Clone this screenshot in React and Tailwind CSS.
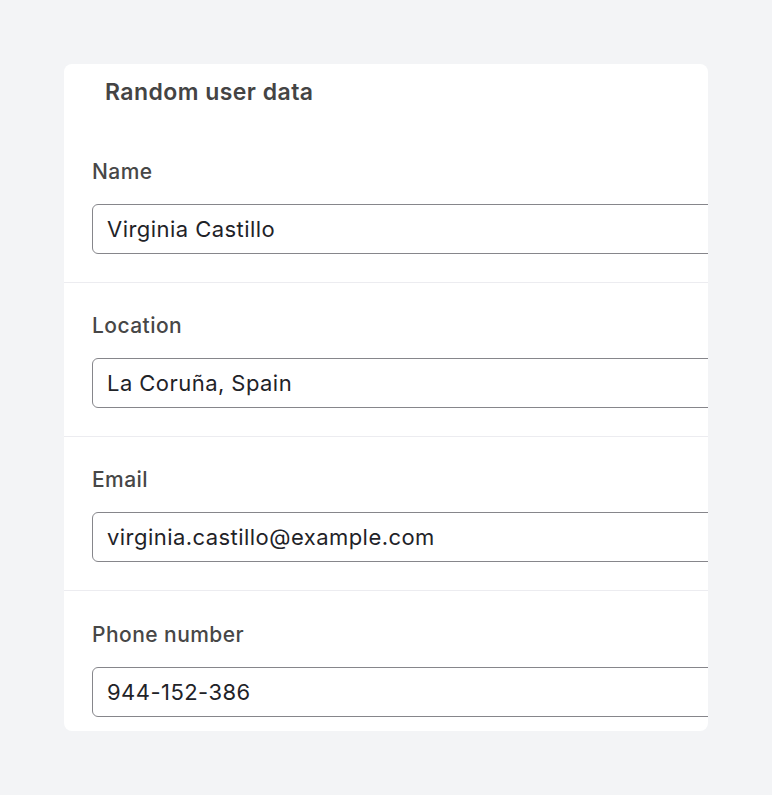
import React from "react";

const fields = [
  { label: "Name", value: "Virginia Castillo" },
  { label: "Location", value: "La Coruña, Spain" },
  { label: "Email", value: "virginia.castillo@example.com" },
  { label: "Phone number", value: "944-152-386" },
];

export default function App() {
  return (
    <div
      className="min-h-[795px] w-full bg-[#f3f4f6] pt-[64px] pl-[64px]"
      style={{ fontFamily: "Inter, 'Noto Sans', sans-serif" }}
    >
      <div className="w-[644px] overflow-hidden rounded-lg bg-white">
        <div className="pl-[41px] pt-[14px] pb-[23px]">
          <h1 className="text-[23px] leading-[28px] font-semibold tracking-[0.45px] text-[#444444]">
            Random user data
          </h1>
        </div>
        {fields.map((f, i) => (
          <div
            key={f.label}
            className={
              i === 0
                ? "px-[28px] pt-[31px] pb-[28px]"
                : i === fields.length - 1
                ? "border-t border-[#ececf0] px-[28px] pt-[32px] pb-[14px]"
                : "border-t border-[#ececf0] px-[28px] pt-[31px] pb-[28px]"
            }
          >
            <div className="text-[21px] leading-6 font-medium tracking-[0.45px] text-[#474747]">
              {f.label}
            </div>
            <div className="mt-[20px] flex h-[50px] w-[700px] items-center rounded-md border border-[#86868b] pl-[14px] pt-[1px] text-[22px] tracking-[0.45px] text-[#1f2328]">
              {f.value}
            </div>
          </div>
        ))}
      </div>
    </div>
  );
}
